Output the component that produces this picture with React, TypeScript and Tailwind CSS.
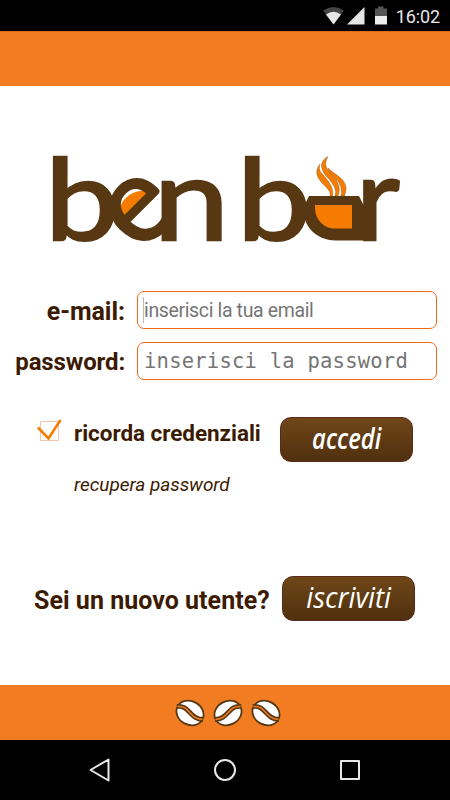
import { useState } from "react";

const StatusBar = () => (
    <div className="h-[31px] bg-black flex items-center justify-end pr-[10px] text-[#e6e6e6]">
        <svg width="66" height="20" viewBox="0 0 66 20" className="mr-[8px]">
            <path d="M1 4.500Q11.500 -2.500 22 4.500L11.500 18.500Z" fill="#444" />
            <path d="M4 8.500Q11.500 2.800 19 8.500L11.500 18.500Z" fill="#e6e6e6" />
            <path d="M25 18.500L42.500 1V18.500Z" fill="#e6e6e6" />
            <path d="M53 2.500H56V.5H61.500V2.500H65V10H53Z" fill="#555" />
            <path d="M53 10H65V18.500H53Z" fill="#eee" />
        </svg>
        <span className="text-[18px] leading-none tracking-[-0.1px] mt-[2px]">16:02</span>
    </div>
);

const Logo = () => (
    <svg width="370" height="160" viewBox="-5 -30 370 160" className="block" role="img" aria-label="ben bar">
        <path d="M75 76C70 57 86 43 106 46Z" fill="#f57c00" />
        <g fill="#573813" stroke="#573813" strokeWidth="2.400" fontSize="111" className="font-[Lato,sans-serif]">
            <text transform="translate(0 94.500) scale(1.190 1.010)">b</text>
            <text transform="translate(94.500 66) rotate(-45) scale(1.080)" x="-28.500" y="28">e</text>
            <text transform="translate(108.500 94.500) scale(1.220 1.040)">n</text>
            <text transform="translate(192 94.500) scale(1.190 1.010)">b</text>
            <text transform="translate(311 94.500) scale(1.080 1.040)">r</text>
        </g>
        <path d="M264 51H314L319 61H330V95.500H291C270 95.500 256 79 259 61Z" fill="#573813" />
        <path d="M270 60H307V83.500H287C277 82 269 73 270 60Z" fill="#f57c00" />
        <g fill="#f57c00" stroke="#573813" strokeWidth=".3">
            <path d="M275 19C269 26 272 33 278 39C283 44 286 47 285 51H287.500C289 44 285 38 280 32C276 27 273 26 275 19Z" />
            <path d="M283 11.500C273 17 276 26 283 33C289 40 292 45 290 51H293C296 44 294 37 287 30C280 22 279 19 283 11.500Z" />
            <path d="M283 23C284 32 299 34 296 51H299.500C306 35 291 31 283 23Z" />
        </g>
    </svg>
);

const Bean = ({ flipped }: { flipped?: boolean }) => (
    <svg width="30" height="28" viewBox="0 0 30 28" className={flipped ? "-scale-x-100" : ""}>
        <ellipse cx="15" cy="14" rx="14" ry="11.800" transform="rotate(28 15 14)" fill="#fff" stroke="#573813" strokeWidth="1.800" />
        <path d="M2 7.500C15 6 14 20 28 20.500" fill="none" stroke="#573813" strokeWidth="4.800" />
        <path d="M2.500 7.500C15 6 14 20 27.500 20.500" fill="none" stroke="#f27c22" strokeWidth="1.500" />
    </svg>
);

export default function App() {
    const [remember, setRemember] = useState(true);

    return (
        <div className="w-[450px] h-[800px] flex flex-col bg-white overflow-hidden font-[Roboto,sans-serif] text-[#3b1b02]">
            <StatusBar />
            <header className="h-[55px] bg-[#f27c22] border-t border-[#d96d1b]" />

            <main className="flex-1 flex flex-col">
                <div className="pt-[29px] pl-[40px]">
                    <Logo />
                </div>

                <form className="pt-[16px] pr-[13px] flex flex-col gap-[13px]">
                    <div className="flex items-center h-[38px]">
                        <label className="w-[125px] mr-[12px] pt-[3px] text-right text-[25px] leading-none font-bold tracking-[-0.05px]">e-mail:</label>
                        <div className="flex-1 h-full flex items-center border border-[#f26a1b] rounded-[7px] pl-[5px]">
                            <span className="w-px h-[26px] bg-[#bbb]" />
                            <input
                                type="email"
                                placeholder="inserisci la tua email"
                                className="w-full pt-[2px] text-[19.500px] tracking-[-0.36px] outline-none placeholder:text-[#757575]"
                            />
                        </div>
                    </div>
                    <div className="flex items-center h-[38px]">
                        <label className="w-[125px] mr-[12px] pt-[2px] text-right text-[24px] leading-none font-bold tracking-[-0.15px]">password:</label>
                        <div className="flex-1 h-full flex items-center border border-[#f26a1b] rounded-[7px] pl-[6px]">
                            <input
                                type="password"
                                placeholder="inserisci la password"
                                className="w-full pt-px text-[20.500px] tracking-[0.23px] outline-none placeholder:text-[#757575] font-['DejaVu_Sans_Mono',monospace]"
                            />
                        </div>
                    </div>
                </form>

                <div className="mt-[37px] pl-[37px] flex items-start">
                    <button type="button" onClick={() => setRemember(!remember)} className="w-[37px] mt-px">
                        <svg width="26" height="24" viewBox="0 0 26 24">
                            <path d="M3.500 3.500H21.500V22.500H3.500Z" fill="none" stroke="#f8c4aa" />
                            {remember && <path d="M1 9.500L11.500 20.500L23.500 2" fill="none" stroke="#f57c00" strokeWidth="2.600" />}
                        </svg>
                    </button>
                    <div className="w-[206px] flex flex-col">
                        <span className="mt-[3px] text-[22.500px] leading-[26px] tracking-[-0.05px] font-bold whitespace-nowrap">ricorda credenziali</span>
                        <a href="#" className="mt-[27px] text-[19px] leading-[23px] tracking-[-0.05px] italic whitespace-nowrap">recupera password</a>
                    </div>
                    <button className="w-[133px] h-[45px] rounded-[11px] border border-[#5a2a18] bg-linear-to-b from-[#6f4718] to-[#50300f] text-white">
                        <span className="inline-block scale-x-[0.85] text-[28px] leading-none font-semibold italic font-['Open_Sans',sans-serif]">accedi</span>
                    </button>
                </div>

                <div className="mt-[80px] pl-[34px] flex items-center">
                    <span className="w-[248px] pt-[4px] text-[25px] leading-none font-bold tracking-[0.03px] whitespace-nowrap">Sei un nuovo utente?</span>
                    <button className="w-[133px] h-[45px] rounded-[11px] border border-[#5a2a18] bg-linear-to-b from-[#6f4718] to-[#50300f] text-white">
                        <span className="inline-block scale-x-[0.95] text-[29px] leading-none font-medium italic font-['Open_Sans',sans-serif]">iscriviti</span>
                    </button>
                </div>
            </main>

            <footer className="h-[55px] bg-[#f27c22] flex items-center justify-center gap-[8px] pl-[5px]">
                <Bean />
                <Bean flipped />
                <Bean />
            </footer>

            <nav className="h-[60px] bg-black flex items-center justify-center gap-[101px]">
                <svg width="24" height="24" viewBox="0 0 24 24" fill="none" stroke="#e8e8e8" strokeWidth="2" strokeLinejoin="round">
                    <path d="M2.500 12L20.500 1.500V22.500Z" />
                </svg>
                <svg width="24" height="24" viewBox="0 0 24 24" fill="none" stroke="#e8e8e8" strokeWidth="2">
                    <circle cx="12" cy="12" r="10" />
                </svg>
                <svg width="24" height="24" viewBox="0 0 24 24" fill="none" stroke="#e8e8e8" strokeWidth="2" strokeLinejoin="round">
                    <path d="M3 3H21V21H3Z" />
                </svg>
            </nav>
        </div>
    );
}
